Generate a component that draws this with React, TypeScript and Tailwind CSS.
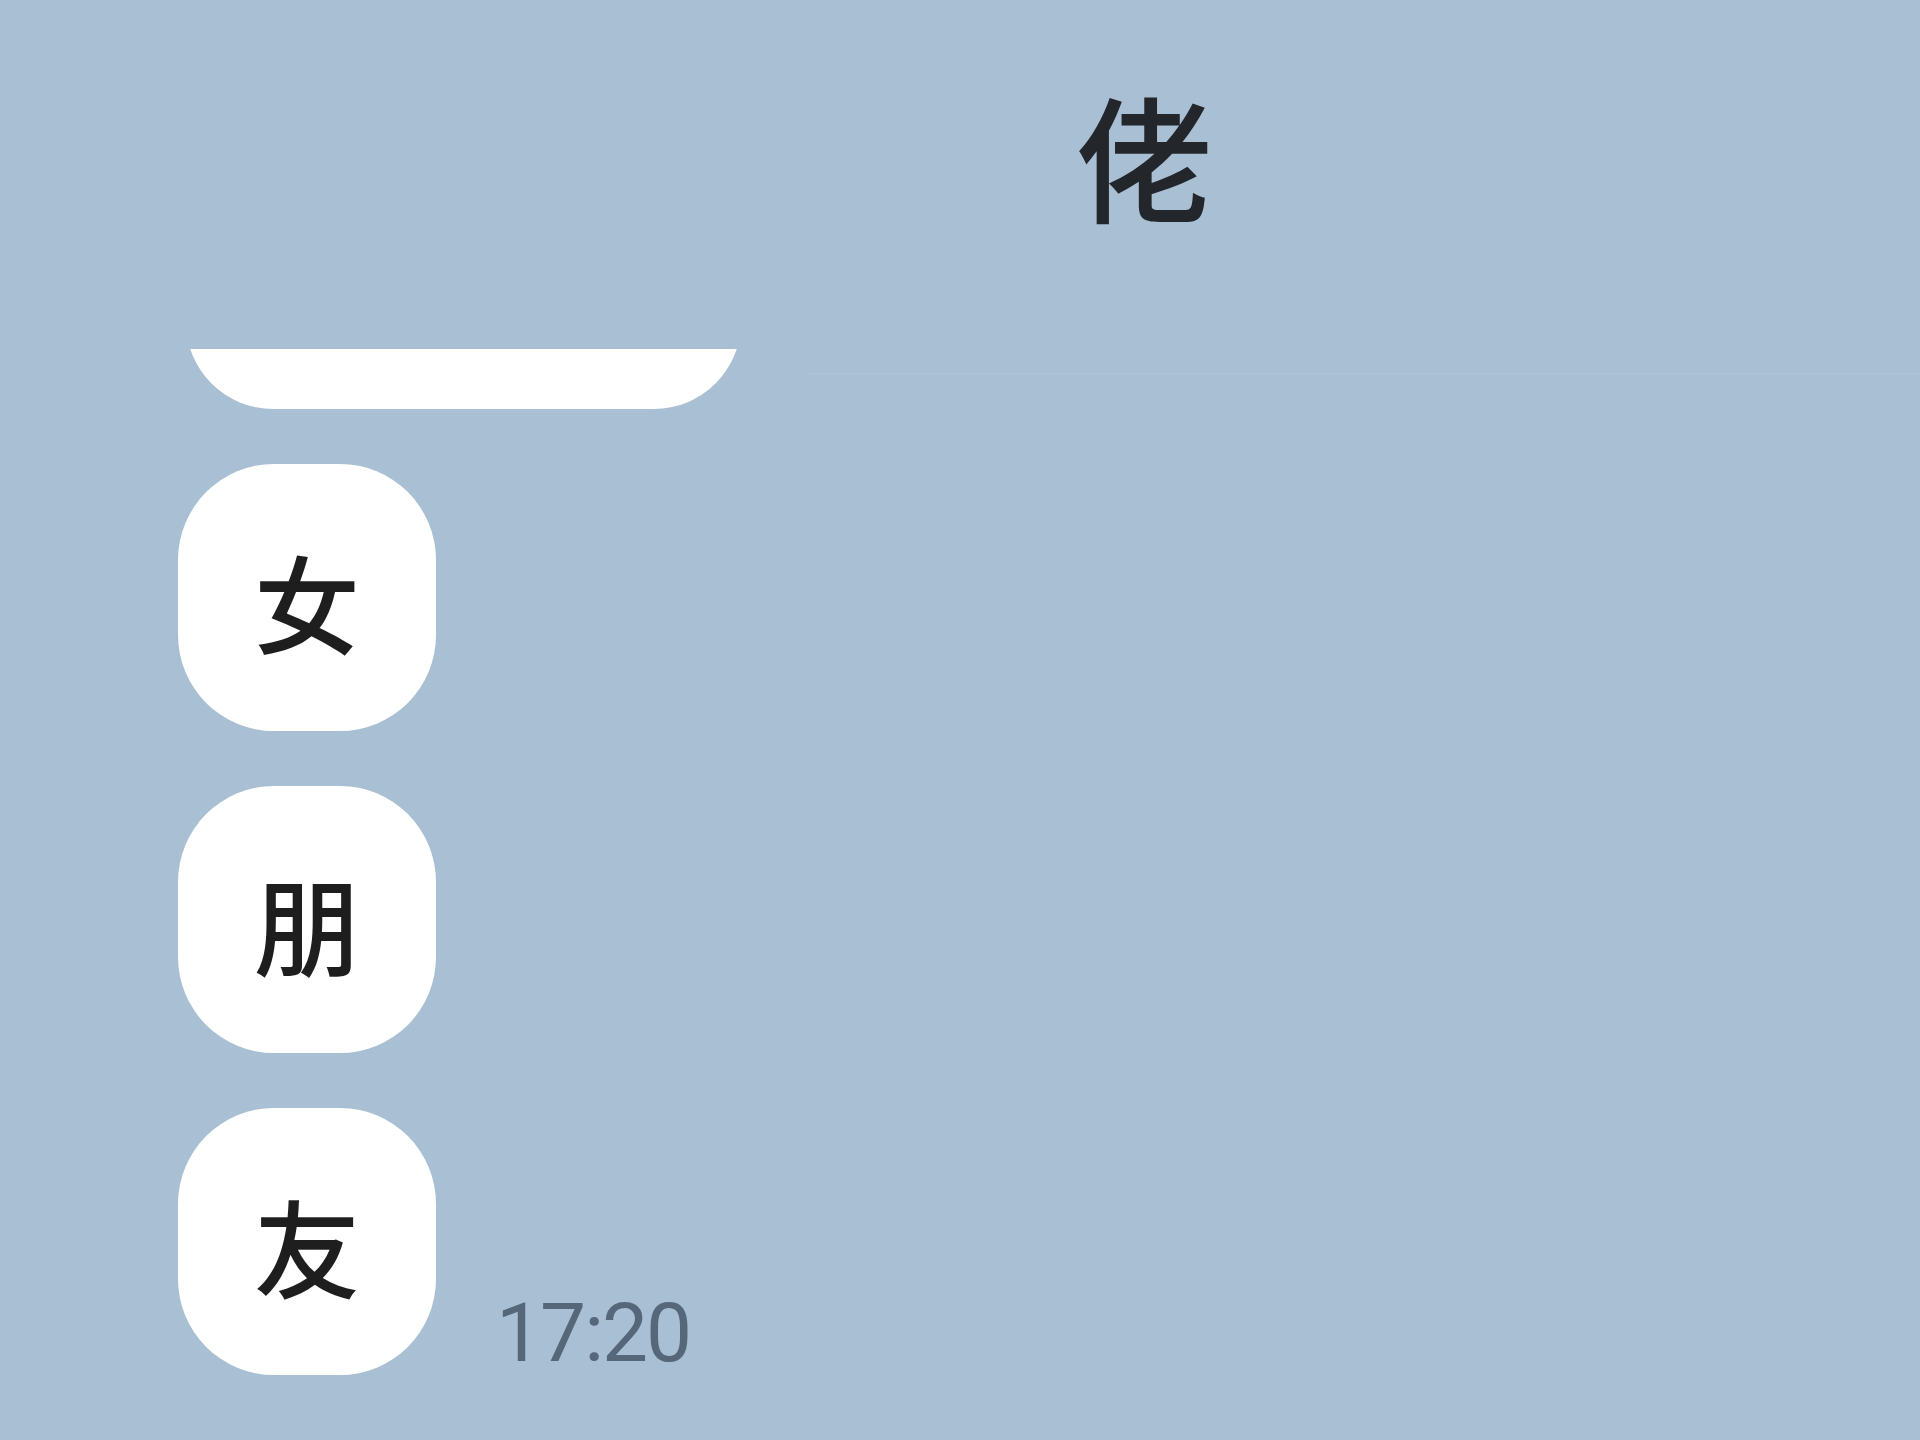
export default function App() {
  const cjk = { fontFamily: '"Noto Sans CJK SC", "Noto Sans", sans-serif' };
  return (
    <div className="w-[1920px] h-[1440px] overflow-hidden bg-[#a9bfd3] flex flex-col">
      {/* header with partner name */}
      <div className="h-[349px] relative shrink-0">
        <div
          className="pl-[1076px] pt-[86px] text-[136px] font-medium leading-none text-[#23272b]"
          style={cjk}
        >
          佬
        </div>
        <div className="absolute left-[808px] right-0 top-[373px] h-px bg-[#b1c5d8]" />
      </div>

      {/* messages */}
      <div className="flex flex-col pl-[178px]">
        {/* previous bubble, scrolled under the header */}
        <div className="ml-[8px] w-[555px] h-[60px] overflow-hidden flex flex-col justify-end">
          <div className="shrink-0 h-[220px] bg-white rounded-[87px]" />
        </div>
        <div className="flex flex-col gap-[55px] mt-[55px]">
          {['女', '朋', '友'].map((c, i) => (
            <div key={c} className="flex items-end gap-[60px]">
              <div
                className="w-[258px] h-[267px] bg-white rounded-[96px] flex items-center justify-center pt-[4px] text-[106px] font-medium leading-none text-[#1e1e1e]"
                style={cjk}
              >
                {c}
              </div>
              {i === 2 && (
                <span
                  className="mb-[1px] text-[82px] leading-none text-[#56677a] tracking-[-2px]"
                  style={{ fontFamily: 'Roboto, "Liberation Sans", sans-serif' }}
                >
                  17:20
                </span>
              )}
            </div>
          ))}
        </div>
      </div>
    </div>
  );
}
